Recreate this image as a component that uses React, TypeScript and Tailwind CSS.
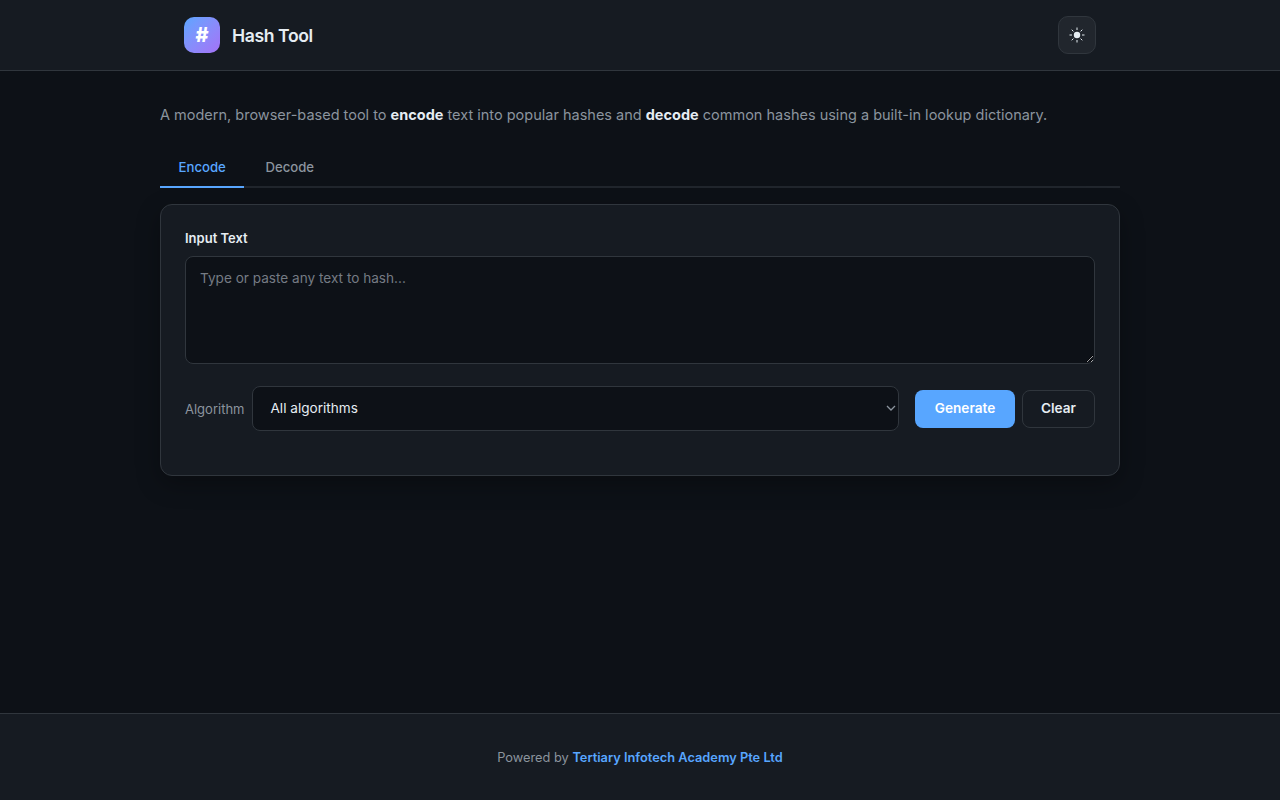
function Header() {
  return (
    <header className="bg-[#161b22] border-b border-[#30363d]">
      <div className="max-w-[960px] mx-auto px-6 py-4 flex items-center justify-between">
        <div className="flex items-center gap-3">
          <div className="w-9 h-9 rounded-[10px] bg-gradient-to-br from-[#58a6ff] to-[#a371f7] flex items-center justify-center text-white font-extrabold text-[20px]">
            #
          </div>
          <h1 className="text-[17.6px] font-semibold text-[#e6edf3] tracking-[-0.4px] pt-[2px]">Hash Tool</h1>
        </div>
        <button className="w-[38px] h-[38px] rounded-[10px] bg-[#21262d] border border-[#30363d] flex items-center justify-center">
          <svg className="w-4 h-4" viewBox="0 0 16 16" fill="none" stroke="#e6edf3" strokeWidth="1">
            <circle cx="8" cy="8" r="3.2" fill="#e6edf3" stroke="none" />
            <path d="M8 .5v2.5M8 13v2.5M.5 8H3M13 8h2.5M2.7 2.7l1.7 1.7M11.6 11.6l1.7 1.7M2.7 13.3l1.7-1.7M11.6 4.4l1.7-1.7" />
          </svg>
        </button>
      </div>
    </header>
  );
}

function Tabs() {
  return (
    <div className="flex border-b-2 border-[#21262d] mb-4">
      <button className="px-[18.5px] py-[9px] text-[13.2px] leading-5 font-medium text-[#58a6ff] border-b-2 border-[#58a6ff] -mb-[2px]">
        Encode
      </button>
      <button className="px-[21px] py-[9px] text-[13.2px] leading-5 font-medium text-[#8b949e] border-b-2 border-transparent -mb-[2px]">
        Decode
      </button>
    </div>
  );
}

function EncodeCard() {
  return (
    <div className="bg-[#161b22] border border-[#30363d] rounded-xl p-6 pb-11 shadow-[0_8px_24px_rgba(0,0,0,0.3)]">
      <label className="block text-[13px] font-semibold text-[#e6edf3] mb-[7px]">Input Text</label>
      <textarea
        className="block w-full h-[108px] bg-[#0d1117] border border-[#30363d] rounded-lg px-[14px] pt-[11px] pb-3 text-[13.6px] text-[#e6edf3] placeholder:text-[#757b84] outline-none"
        placeholder="Type or paste any text to hash..."
      />
      <div className="flex items-center mt-[22px]">
        <span className="text-[13px] text-[#8b949e] mr-2 mt-[3px]">Algorithm</span>
        <div className="relative flex-1 mr-4">
          <select className="block w-full h-[45px] appearance-none bg-[#0d1117] border border-[#30363d] rounded-lg pl-[17px] pt-px text-[13.6px] text-[#e6edf3] outline-none">
            <option>All algorithms</option>
          </select>
          <svg
            className="absolute right-[3px] top-[17px] w-[10px] h-[10px] text-[#8b949e]"
            viewBox="0 0 10 10"
            fill="none"
            stroke="currentColor"
            strokeWidth="1.3"
          >
            <path d="M1 3l4 4 4-4" />
          </svg>
        </div>
        <button className="w-[100px] h-[38px] mt-px rounded-lg bg-[#58a6ff] text-white text-[13.6px] font-semibold mr-[7px]">
          Generate
        </button>
        <button className="w-[73px] h-[38px] mt-px rounded-lg bg-transparent border border-[#30363d] text-[#e6edf3] text-[13.6px] font-semibold">
          Clear
        </button>
      </div>
    </div>
  );
}

export default function App() {
  return (
    <div className="min-h-screen flex flex-col bg-[#0d1117] font-['Inter',sans-serif]">
      <Header />
      <main className="flex-1 w-[960px] mx-auto pt-[33px]">
        <p className="text-[14.5px] leading-[22px] text-[#8b949e] mb-[22px]">
          A modern, browser-based tool to <strong className="text-[#e6edf3] font-bold">encode</strong> text into popular
          hashes and <strong className="text-[#e6edf3] font-bold">decode</strong> common hashes using a built-in lookup
          dictionary.
        </p>
        <Tabs />
        <EncodeCard />
      </main>
      <footer className="bg-[#161b22] border-t border-[#30363d] h-[87px] flex items-center justify-center text-[12.8px] text-[#8b949e] pt-[2px]">
        <span>
          Powered by <a className="text-[#58a6ff] font-semibold">Tertiary Infotech Academy Pte Ltd</a>
        </span>
      </footer>
    </div>
  );
}
